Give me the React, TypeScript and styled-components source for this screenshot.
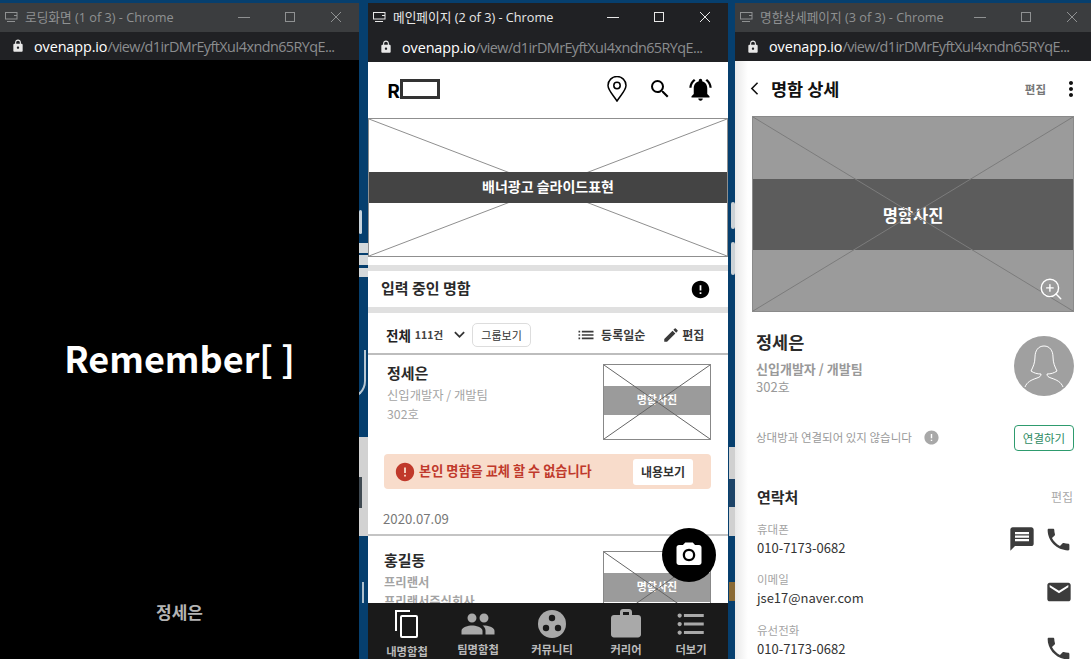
import React from 'react';
import styled, { createGlobalStyle } from 'styled-components';
import {
  MdLock,
  MdSearch,
  MdNotificationsActive,
  MdError,
  MdKeyboardArrowDown,
  MdList,
  MdEdit,
  MdCameraAlt,
  MdPeople,
  MdWork,
  MdFormatListBulleted,
  MdMessage,
  MdPhone,
  MdEmail,
  MdMoreVert,
  MdArrowBackIosNew,
} from 'react-icons/md';
import { ZoomIn } from 'lucide-react';

const KR = `"Noto Sans CJK KR", "Noto Sans", sans-serif`;

const GlobalStyle = createGlobalStyle`
  html, body { margin: 0; padding: 0; background: #063f6e; }
  * { box-sizing: border-box; }
`;

const Desktop = styled.div`
  position: relative;
  width: 1091px;
  height: 659px;
  overflow: hidden;
  background: #063f6e;
  display: flex;
  padding-top: 3px;
  font-family: ${KR};
`;

const Wall = styled.div<{ $x: number; $y: number; $w: number; $h: number; $c: string; $r?: number }>`
  position: absolute;
  left: ${(p) => p.$x}px;
  top: ${(p) => p.$y}px;
  width: ${(p) => p.$w}px;
  height: ${(p) => p.$h}px;
  background: ${(p) => p.$c};
  border-radius: ${(p) => p.$r || 0}px;
`;

const WallArc = styled.div`
  position: absolute;
  left: 345px;
  top: 350px;
  width: 21px;
  height: 49px;
  border-right: 2px solid #b9c8d3;
  border-bottom: 2px solid #b9c8d3;
  border-bottom-right-radius: 18px;
`;

const Win = styled.div<{ $w: number; $ml?: number }>`
  position: relative;
  z-index: 1;
  width: ${(p) => p.$w}px;
  margin-left: ${(p) => p.$ml || 0}px;
  height: 656px;
  flex: none;
  display: flex;
  flex-direction: column;
  overflow: hidden;
`;

const TitleBar = styled.div<{ $active?: boolean }>`
  height: 29px;
  flex: none;
  display: flex;
  align-items: center;
  padding: 0 0 2px 5px;
  background: ${(p) => (p.$active ? '#202124' : '#3b3d3f')};
  color: ${(p) => (p.$active ? '#e8e8e8' : '#8f9192')};
  font-size: 12.7px;
  font-family: "Open Sans", ${KR};
`;

const TitleText = styled.span`
  margin-left: 7px;
  flex: 1;
  white-space: nowrap;
`;

const Controls = styled.div<{ $mr: number }>`
  display: flex;
  align-items: center;
  margin-right: ${(p) => p.$mr}px;
  gap: 30px;
`;

const AddressBar = styled.div<{ $h: number }>`
  height: ${(p) => p.$h}px;
  flex: none;
  background: #202124;
  display: flex;
  align-items: center;
  padding-left: 11px;
  color: #fff;
  white-space: nowrap;
  font-family: "Open Sans", sans-serif;
  font-size: 14.4px;
  letter-spacing: -0.1px;
  svg { margin-right: 9px; flex: none; }
`;

const Path = styled.span`
  color: #8b8d8f;
  letter-spacing: -0.57px;
`;

const Chrome = ({ title, active, h, mr }: { title: string; active?: boolean; h: number; mr: number }) => (
  <>
    <TitleBar $active={active}>
      <svg width="13" height="12" viewBox="0 0 13 12" fill="none" stroke="currentColor">
        <rect x="0.5" y="1.5" width="11.5" height="6.5" />
        <path d="M2 10.5h8M9 4.5h3" />
      </svg>
      <TitleText>{title} - Chrome</TitleText>
      <Controls $mr={mr}>
        <svg width="16" height="16" viewBox="0 0 16 16" stroke="currentColor" fill="none">
          <path d="M2 8.5h12" />
        </svg>
        <svg width="16" height="16" viewBox="0 0 16 16" stroke="currentColor" fill="none">
          <rect x="3.5" y="3.5" width="9" height="9" />
        </svg>
        <svg width="16" height="16" viewBox="0 0 16 16" stroke="currentColor" fill="none">
          <path d="M3 3l10 10M13 3L3 13" />
        </svg>
      </Controls>
    </TitleBar>
    <AddressBar $h={h}>
      <MdLock size={14} color="#e8e8e8" />
      ovenapp.io<Path>/view/d1irDMrEyftXuI4xndn65RYqE...</Path>
    </AddressBar>
  </>
);

/* ---------- loading window ---------- */

const LoadingBody = styled.div`
  flex: 1;
  background: #000;
  display: flex;
  flex-direction: column;
  align-items: center;
`;

const Logo = styled.div`
  margin-top: 267px;
  color: #fff;
  font-size: 36px;
  line-height: 60px;
  font-weight: 700;
`;

const LoadingName = styled.div`
  margin-top: 213px;
  color: #b4b4b4;
  font-size: 17px;
  line-height: 24px;
  font-weight: 700;
`;

/* ---------- wireframe placeholder ---------- */

const Placeholder = styled.div<{ $w?: number; $h: number; $bg?: string; $line: string; $pb?: number }>`
  position: relative;
  flex: none;
  width: ${(p) => (p.$w ? `${p.$w}px` : '100%')};
  height: ${(p) => p.$h}px;
  padding-bottom: ${(p) => p.$pb || 0}px;
  background: ${(p) => p.$bg || '#fff'};
  border: 1px solid ${(p) => p.$line};
  display: flex;
  flex-direction: column;
  justify-content: center;
`;

const Band = styled.div<{ $h: number; $c: string; $fs: number; $raised?: boolean; $pb?: number; $pt?: number }>`
  position: relative;
  z-index: ${(p) => (p.$raised ? 1 : 0)};
  height: ${(p) => p.$h}px;
  padding: ${(p) => p.$pt || 0}px 0 ${(p) => p.$pb || 0}px;
  background: ${(p) => p.$c};
  color: #fff;
  font-size: ${(p) => p.$fs}px;
  font-weight: 700;
  display: flex;
  align-items: center;
  justify-content: center;
`;

const CrossSvg = styled.svg<{ $over?: boolean }>`
  position: absolute;
  inset: 0;
  width: 100%;
  height: 100%;
  z-index: ${(p) => (p.$over ? 1 : 0)};
`;

const Cross = ({ c, over }: { c: string; over?: boolean }) => (
  <CrossSvg $over={over} viewBox="0 0 100 100" preserveAspectRatio="none">
    <path d="M0 0L100 100M100 0L0 100" stroke={c} strokeWidth="1" vectorEffect="non-scaling-stroke" fill="none" />
  </CrossSvg>
);

/* ---------- main window ---------- */

const MainBody = styled.div`
  flex: 1;
  min-height: 0;
  background: #fff;
  position: relative;
  overflow: hidden;
  isolation: isolate;
  color: #222;
`;

const TopHeader = styled.div`
  height: 56px;
  display: flex;
  align-items: center;
  padding: 0 0 2px 19px;
  color: #000;
`;

const Brand = styled.div`
  font-weight: 700;
  font-size: 19px;
`;

const BrandBox = styled.div`
  width: 40px;
  height: 20px;
  border: 3px solid #333;
  margin-right: 167px;
`;

const HeaderIcons = styled.div`
  display: flex;
  align-items: center;
  gap: 15px;
  svg:first-child { margin-right: 6px; }
`;

const Divider = styled.div<{ $mt?: number }>`
  height: 6px;
  margin-top: ${(p) => p.$mt || 0}px;
  background: #e0e0e0;
`;

const DraftRow = styled.div`
  height: 36px;
  display: flex;
  align-items: center;
  justify-content: space-between;
  padding: 0 17px 3px 13px;
  font-size: 15px;
  font-weight: 700;
  color: #2a2a2a;
  svg { margin-top: 3px; }
`;

const ListHeader = styled.div`
  height: 42px;
  display: flex;
  align-items: center;
  padding: 3px 0 0 18px;
  border-bottom: 2px solid #bdbdbd;
  color: #333;
`;

const ListTitle = styled.span`
  font-size: 13.5px;
  font-weight: 700;
  color: #222;
`;

const ListCount = styled.span`
  font-size: 10.5px;
  font-weight: 700;
  margin-left: 4px;
  color: #444;
`;

const GroupButton = styled.div`
  width: 59px;
  height: 24px;
  margin-left: 2px;
  border: 1px solid #ddd;
  border-radius: 5px;
  font-size: 11px;
  display: flex;
  align-items: center;
  justify-content: center;
`;

const ToolGroup = styled.div<{ $ml: number; $gap: number }>`
  display: flex;
  align-items: center;
  margin-left: ${(p) => p.$ml}px;
  gap: ${(p) => p.$gap}px;
  font-size: 12px;
  font-weight: 700;
  color: #3a3a3a;
`;

const CardRow = styled.div<{ $pl: number; $pt: number }>`
  display: flex;
  justify-content: space-between;
  padding: ${(p) => p.$pt}px 17px 0 ${(p) => p.$pl}px;
`;

const CardName = styled.div`
  font-size: 15px;
  line-height: 21px;
  font-weight: 700;
  color: #2a2a2a;
  margin: -2px 0 3px;
`;

const CardMeta = styled.div<{ $bold?: boolean }>`
  font-size: 12.3px;
  line-height: 19px;
  color: #a4a4a4;
  font-weight: ${(p) => (p.$bold ? 700 : 400)};
`;

const AlertBar = styled.div`
  height: 35px;
  margin: 14px 17px 0 16px;
  background: #f8dccb;
  border-radius: 4px;
  display: flex;
  align-items: center;
  padding: 0 18px 0 10px;
  color: #c0392b;
  font-size: 13.2px;
  font-weight: 700;
  svg { margin-right: 3px; }
`;

const AlertText = styled.span`
  flex: 1;
  padding-bottom: 2px;
`;

const AlertButton = styled.div`
  width: 60px;
  height: 26px;
  background: #fff;
  border-radius: 3px;
  color: #333;
  font-size: 12px;
  font-weight: 700;
  display: flex;
  align-items: center;
  justify-content: center;
`;

const DateRow = styled.div`
  height: 47px;
  padding: 20px 0 0 15px;
  font-size: 13.2px;
  line-height: 20px;
  color: #777;
  border-bottom: 2px solid #c4c4c4;
`;

const CameraFab = styled.div`
  position: absolute;
  z-index: 5;
  left: 294px;
  top: 466px;
  width: 54px;
  height: 54px;
  border-radius: 50%;
  background: #000;
  color: #fff;
  display: flex;
  align-items: center;
  justify-content: center;
`;

const BottomNav = styled.div`
  height: 56px;
  flex: none;
  position: relative;
  z-index: 3;
  background: #1a1a1a;
  display: grid;
  grid-template-columns: 78px 64px 84px 64px 66px;
`;

const NavItem = styled.div<{ $on?: boolean }>`
  display: flex;
  flex-direction: column;
  align-items: center;
  color: ${(p) => (p.$on ? '#fff' : '#a9a9a9')};
  padding-top: 3px;
`;

const NavIcon = styled.div`
  height: 36px;
  display: flex;
  align-items: center;
  justify-content: center;
`;

const NavLabel = styled.div<{ $low?: boolean }>`
  font-size: 11.3px;
  line-height: 15px;
  margin-top: ${(p) => (p.$low ? 2 : 0)}px;
  font-weight: 700;
  color: #bbb;
  white-space: nowrap;
`;

/* ---------- detail window ---------- */

const DetailBody = styled.div`
  flex: 1;
  min-height: 0;
  background: linear-gradient(90deg, #e9e9e9 0, #fff 13px);
  padding: 0 17px;
  overflow: hidden;
  color: #222;
`;

const DetailHeader = styled.div`
  height: 55px;
  display: flex;
  align-items: center;
  color: #111;
  svg:first-child { margin-left: -5px; }
`;

const DetailTitle = styled.div`
  flex: 1;
  font-size: 17.5px;
  font-weight: 700;
  margin-left: 9px;
`;

const HeaderEdit = styled.div`
  font-size: 11.5px;
  font-weight: 700;
  color: #777;
  margin-right: 13px;
`;

const ZoomBadge = styled.div`
  position: absolute;
  right: 9px;
  bottom: 9px;
  z-index: 2;
  color: #fff;
  display: flex;
`;

const Profile = styled.div`
  display: flex;
  justify-content: space-between;
  padding: 24px 0 0 4px;
`;

const ProfileName = styled.div`
  font-size: 17.5px;
  line-height: 24px;
  font-weight: 700;
  color: #2a2a2a;
  margin-top: -6px;
`;

const ProfileRole = styled.div`
  font-size: 13px;
  line-height: 20px;
  font-weight: 700;
  color: #999;
  margin-top: 5px;
`;

const ProfileRoom = styled.div`
  font-size: 13px;
  line-height: 18px;
  margin-top: -1px;
  color: #999;
`;

const Avatar = styled.div`
  width: 60px;
  height: 60px;
  border-radius: 50%;
  background: #a0a0a0;
  display: flex;
`;

const ConnectRow = styled.div`
  display: flex;
  align-items: center;
  justify-content: space-between;
  margin-top: 29px;
  padding-left: 4px;
`;

const ConnectText = styled.div`
  display: flex;
  align-items: center;
  gap: 11px;
  font-size: 11.5px;
  padding-bottom: 2px;
  color: #999;
`;

const ConnectButton = styled.div`
  width: 60px;
  height: 26px;
  border: 1px solid #2e9b6e;
  border-radius: 4px;
  color: #2e8b63;
  font-size: 11.5px;
  display: flex;
  align-items: center;
  justify-content: center;
`;

const ContactHead = styled.div`
  display: flex;
  align-items: center;
  justify-content: space-between;
  margin: 33px 0 -2px;
  padding: 0 1px 0 5px;
  height: 24px;
`;

const ContactTitle = styled.div`
  font-size: 15px;
  font-weight: 700;
  color: #2a2a2a;
`;

const ContactEdit = styled.div`
  font-size: 12px;
  color: #aaa;
`;

const ContactRow = styled.div`
  display: flex;
  align-items: flex-end;
  justify-content: space-between;
  height: 50.5px;
  padding: 0 1px 0 5px;
`;

const ContactLabel = styled.div`
  font-size: 11.5px;
  line-height: 18px;
  color: #a4a4a4;
`;

const ContactValue = styled.div`
  font-size: 13px;
  line-height: 18px;
  margin-top: 1px;
  color: #333;
`;

const ContactIcons = styled.div<{ $mb: number }>`
  display: flex;
  align-items: center;
  gap: 8px;
  color: #3c3c3c;
  margin-bottom: ${(p) => p.$mb}px;
`;

const contacts = [
  { label: '휴대폰', value: '010-7173-0682', icons: ['msg', 'phone'], mb: 3 },
  { label: '이메일', value: 'jse17@naver.com', icons: ['mail'], mb: 1 },
  { label: '유선전화', value: '010-7173-0682', icons: ['phone'], mb: -5 },
];

const navItems = [
  { label: '내명함첩', on: true },
  { label: '팀명함첩' },
  { label: '커뮤니티' },
  { label: '커리어' },
  { label: '더보기' },
];

const navIcon = (i: number) => {
  if (i === 0) {
    return (
      <svg width="26" height="30" viewBox="0 0 26 30" fill="none" stroke="currentColor" strokeWidth="2">
        <path d="M2 22V2h14" />
        <rect x="7" y="7" width="16" height="21" rx="1" />
      </svg>
    );
  }
  if (i === 1) return <MdPeople size={36} />;
  if (i === 2) {
    return (
      <svg width="30" height="30" viewBox="0 0 30 30">
        <circle cx="15" cy="15" r="14" fill="currentColor" />
        <circle cx="15" cy="9" r="3.2" fill="#1a1a1a" />
        <circle cx="9" cy="19" r="3.2" fill="#1a1a1a" />
        <circle cx="21" cy="19" r="3.2" fill="#1a1a1a" />
      </svg>
    );
  }
  if (i === 3) return <MdWork size={36} />;
  return <MdFormatListBulleted size={34} />;
};

const App = () => {
  return (
    <Desktop>
      <GlobalStyle />
      <Wall $x={359} $y={210} $w={3} $h={24} $c="#c9d4dc" $r={3} />
      <Wall $x={359} $y={243} $w={9} $h={10} $c="#d4d8da" />
      <Wall $x={359} $y={255} $w={9} $h={10} $c="#d4d8da" />
      <Wall $x={359} $y={268} $w={9} $h={9} $c="#d4d8da" />
      <WallArc />
      <Wall $x={359} $y={437} $w={9} $h={99} $c="#d2d2d2" />
      <Wall $x={359} $y={477} $w={3} $h={31} $c="#404a52" />
      <Wall $x={362} $y={582} $w={2} $h={21} $c="#aebfcc" />
      <Wall $x={731} $y={202} $w={4} $h={27} $c="#ccd2d6" $r={2} />
      <Wall $x={731} $y={242} $w={4} $h={33} $c="#ccd2d6" $r={2} />
      <Wall $x={729} $y={447} $w={6} $h={89} $c="#d0d0d0" />
      <Wall $x={729} $y={479} $w={6} $h={28} $c="#1d4468" />
      <Wall $x={729} $y={582} $w={6} $h={19} $c="#8a6a35" />

      <Win $w={359}>
        <Chrome title="로딩화면 (1 of 3)" h={28} mr={15} />
        <LoadingBody>
          <Logo>Remember[ ]</Logo>
          <LoadingName>정세은</LoadingName>
        </LoadingBody>
      </Win>

      <Win $w={360} $ml={9}>
        <Chrome title="메인페이지 (2 of 3)" active h={30} mr={15} />
        <MainBody>
          <TopHeader>
            <Brand>R</Brand>
            <BrandBox />
            <HeaderIcons>
              <svg width="20" height="26" viewBox="0 0 20 26" fill="none" stroke="#000" strokeWidth="1.5">
                <path d="M10 25C6 19 1 14 1 9.5a9 9 0 0 1 18 0C19 14 14 19 10 25Z" />
                <circle cx="10" cy="9.5" r="3.2" />
              </svg>
              <MdSearch size={24} />
              <MdNotificationsActive size={27} />
            </HeaderIcons>
          </TopHeader>
          <Placeholder $h={139} $line="#8f8f8f">
            <Cross c="#8f8f8f" />
            <Band $h={31} $c="#444" $fs={14} $raised $pb={3}>배너광고 슬라이드표현</Band>
          </Placeholder>
          <Divider $mt={8} />
          <DraftRow>
            입력 중인 명함
            <MdError size={21} color="#000" />
          </DraftRow>
          <Divider />
          <ListHeader>
            <ListTitle>전체</ListTitle>
            <ListCount>111건</ListCount>
            <MdKeyboardArrowDown size={21} style={{ marginLeft: 6 }} />
            <GroupButton>그룹보기</GroupButton>
            <ToolGroup $ml={45} $gap={5}>
              <MdList size={20} />
              등록일순
            </ToolGroup>
            <ToolGroup $ml={17} $gap={2}>
              <MdEdit size={18} />
              편집
            </ToolGroup>
          </ListHeader>
          <CardRow $pl={19} $pt={9}>
            <div>
              <CardName>정세은</CardName>
              <CardMeta>신입개발자 / 개발팀</CardMeta>
              <CardMeta>302호</CardMeta>
            </div>
            <Placeholder $w={108} $h={76} $line="#888" $pb={4}>
              <Cross c="#666" over />
              <Band $h={29} $c="#9b9b9b" $fs={11} $pb={3}>명함사진</Band>
            </Placeholder>
          </CardRow>
          <AlertBar>
            <MdError size={22} />
            <AlertText>본인 명함을 교체 할 수 없습니다</AlertText>
            <AlertButton>내용보기</AlertButton>
          </AlertBar>
          <DateRow>2020.07.09</DateRow>
          <CardRow $pl={16} $pt={15}>
            <div>
              <CardName>홍길동</CardName>
              <CardMeta $bold>프리랜서</CardMeta>
              <CardMeta $bold>프리랜서주식회사</CardMeta>
            </div>
            <Placeholder $w={108} $h={76} $line="#888" $pb={4}>
              <Cross c="#666" over />
              <Band $h={29} $c="#9b9b9b" $fs={11} $pb={3}>명함사진</Band>
            </Placeholder>
          </CardRow>
          <CameraFab>
            <MdCameraAlt size={30} />
          </CameraFab>
        </MainBody>
        <BottomNav>
          {navItems.map((n, i) => (
            <NavItem key={n.label} $on={n.on}>
              <NavIcon>{navIcon(i)}</NavIcon>
              <NavLabel $low={n.on}>{n.label}</NavLabel>
            </NavItem>
          ))}
        </BottomNav>
      </Win>

      <Win $w={356} $ml={7}>
        <Chrome title="명함상세페이지 (3 of 3)" h={29} mr={11} />
        <DetailBody>
          <DetailHeader>
            <MdArrowBackIosNew size={15} />
            <DetailTitle>명함 상세</DetailTitle>
            <HeaderEdit>편집</HeaderEdit>
            <MdMoreVert size={24} style={{ marginRight: -9 }} />
          </DetailHeader>
          <Placeholder $h={196} $bg="#9b9b9b" $line="#8a8a8a">
            <Cross c="#7c7c7c" over />
            <Band $h={71} $c="#5c5c5c" $fs={16.5} $pt={2}>명함사진</Band>
            <ZoomBadge>
              <ZoomIn size={26} strokeWidth={1.3} />
            </ZoomBadge>
          </Placeholder>
          <Profile>
            <div>
              <ProfileName>정세은</ProfileName>
              <ProfileRole>신입개발자 / 개발팀</ProfileRole>
              <ProfileRoom>302호</ProfileRoom>
            </div>
            <Avatar>
              <svg width="60" height="60" viewBox="0 0 60 60" fill="none" stroke="#fff" strokeWidth="1">
                <path d="M30 10c-6 0-9 5-9 11 0 6-2 10-4 14 3 2 6 3 10 3 0 2-1 3-4 4-6 2-10 4-12 9" />
                <path d="M30 10c6 0 9 5 9 11 0 6 2 10 4 14-3 2-6 3-10 3 0 2 1 3 4 4 6 2 10 4 12 9" />
              </svg>
            </Avatar>
          </Profile>
          <ConnectRow>
            <ConnectText>
              상대방과 연결되어 있지 않습니다
              <MdError size={17} color="#a8a8a8" />
            </ConnectText>
            <ConnectButton>연결하기</ConnectButton>
          </ConnectRow>
          <ContactHead>
            <ContactTitle>연락처</ContactTitle>
            <ContactEdit>편집</ContactEdit>
          </ContactHead>
          {contacts.map((c) => (
            <ContactRow key={c.label}>
              <div>
                <ContactLabel>{c.label}</ContactLabel>
                <ContactValue>{c.value}</ContactValue>
              </div>
              <ContactIcons $mb={c.mb}>
                {c.icons.includes('msg') && <MdMessage size={28} />}
                {c.icons.includes('phone') && <MdPhone size={29} />}
                {c.icons.includes('mail') && <MdEmail size={28} />}
              </ContactIcons>
            </ContactRow>
          ))}
        </DetailBody>
      </Win>
    </Desktop>
  );
};

export default App;
